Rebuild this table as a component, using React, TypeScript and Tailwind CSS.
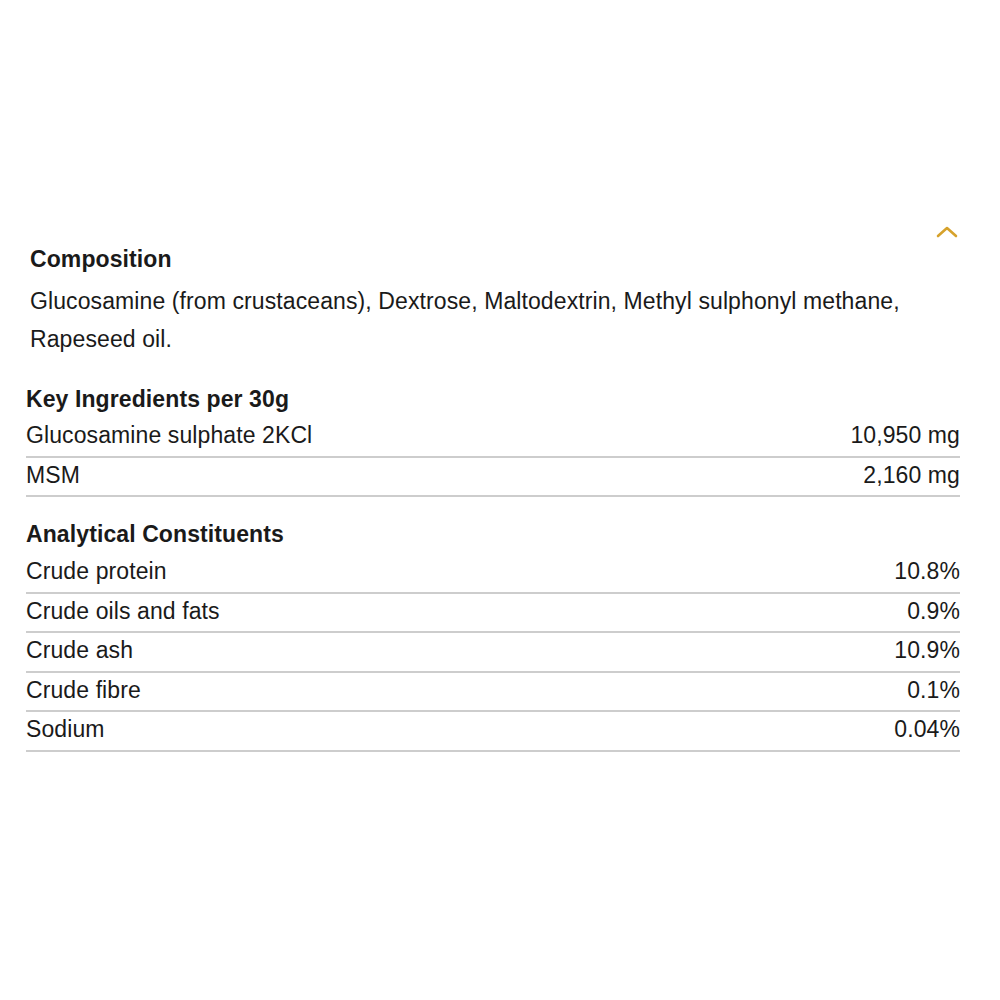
import React from 'react';

const keyIngredients = [
  { name: 'Glucosamine sulphate 2KCl', value: '10,950 mg' },
  { name: 'MSM', value: '2,160 mg' },
];

const constituents = [
  { name: 'Crude protein', value: '10.8%' },
  { name: 'Crude oils and fats', value: '0.9%' },
  { name: 'Crude ash', value: '10.9%' },
  { name: 'Crude fibre', value: '0.1%' },
  { name: 'Sodium', value: '0.04%' },
];

const Row = ({ name, value }: { name: string; value: string }) => (
  <div className="flex items-center justify-between pt-[4px] pb-[6px] leading-[27.5px] border-b-2 border-[#cdcdcd]">
    <span>{name}</span>
    <span>{value}</span>
  </div>
);

const App = () => {
  return (
    <div
      className="min-h-[1000px] bg-white text-[#1a1a1a] text-[23px] tracking-[0.1px]"
      style={{ fontFamily: '"Liberation Sans", Arial, sans-serif' }}
    >
      <div className="ml-[26px] w-[934px] pt-[226px]">
        {/* toggle chevron */}
        <div className="flex justify-end pr-[2px] h-[18px]">
          <svg width="22" height="12" viewBox="0 0 22 12" fill="none">
            <polyline
              points="2,10 11,2 20,10"
              stroke="#d6a22c"
              strokeWidth="2.6"
              strokeLinecap="round"
              strokeLinejoin="round"
            />
          </svg>
        </div>

        {/* Composition */}
        <div className="pl-[4px]">
          <h3 className="font-bold leading-[30px]">Composition</h3>
          <p className="mt-[8px] leading-[38px]">
            Glucosamine (from crustaceans), Dextrose, Maltodextrin, Methyl sulphonyl methane, Rapeseed oil.
          </p>
        </div>

        {/* Key ingredients */}
        <h3 className="mt-[26px] mb-[4px] font-bold leading-[30px]">Key Ingredients per 30g</h3>
        {keyIngredients.map((r) => (
          <Row key={r.name} name={r.name} value={r.value} />
        ))}

        {/* Analytical constituents */}
        <h3 className="mt-[22px] mb-[5px] font-bold leading-[30px]">Analytical Constituents</h3>
        {constituents.map((r) => (
          <Row key={r.name} name={r.name} value={r.value} />
        ))}
      </div>
    </div>
  );
};

export default App;
